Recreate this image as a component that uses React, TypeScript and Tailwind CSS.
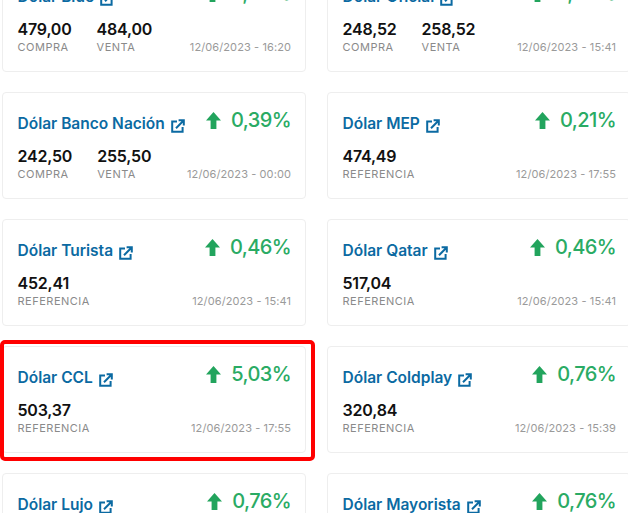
import React from 'react';

interface Cotizacion {
  name: string;
  pct: string;
  date: string;
  buy?: string;
  sell?: string;
  ref?: string;
  highlight?: boolean;
}

const rows: Cotizacion[] = [
  { name: 'Dólar Blue', pct: '0,00%', date: '12/06/2023 - 16:20', buy: '479,00', sell: '484,00' },
  { name: 'Dólar Oficial', pct: '0,00%', date: '12/06/2023 - 15:41', buy: '248,52', sell: '258,52' },
  { name: 'Dólar Banco Nación', pct: '0,39%', date: '12/06/2023 - 00:00', buy: '242,50', sell: '255,50' },
  { name: 'Dólar MEP', pct: '0,21%', date: '12/06/2023 - 17:55', ref: '474,49' },
  { name: 'Dólar Turista', pct: '0,46%', date: '12/06/2023 - 15:41', ref: '452,41' },
  { name: 'Dólar Qatar', pct: '0,46%', date: '12/06/2023 - 15:41', ref: '517,04' },
  { name: 'Dólar CCL', pct: '5,03%', date: '12/06/2023 - 17:55', ref: '503,37', highlight: true },
  { name: 'Dólar Coldplay', pct: '0,76%', date: '12/06/2023 - 15:39', ref: '320,84' },
  { name: 'Dólar Lujo', pct: '0,76%', date: '12/06/2023 - 15:41', ref: '517,04' },
  { name: 'Dólar Mayorista', pct: '0,76%', date: '12/06/2023 - 15:41', ref: '240,00' },
];

function LinkIcon() {
  return (
    <svg width="14" height="14" viewBox="0 0 14 14" fill="none" stroke="#0b6aa2" strokeWidth="2" className="shrink-0 mt-[3px]">
      <path d="M6 2.4H1.2v10.4h10.4V8" />
      <path d="M5 9.2 12.4 1.8M7.6 1.2h5.2v5.2" />
    </svg>
  );
}

function ArrowUp() {
  return (
    <svg width="15" height="17" viewBox="0 0 15 17" fill="#22a45d" className="shrink-0">
      <path d="M7.5 0 15 8.4H10.4V17H4.6V8.4H0Z" />
    </svg>
  );
}

function Value({ value, label }: { value: string; label: string }) {
  return (
    <div className="flex flex-col">
      <span className="text-[16px] leading-[20px] font-semibold text-[#111] tracking-[-0.2px]">{value}</span>
      <span className="text-[11px] leading-[17px] text-[#8a8a8a] tracking-[0.5px]">{label}</span>
    </div>
  );
}

function Card({ item }: { item: Cotizacion }) {
  return (
    <div className="relative h-[107px]">
      <div className="h-full bg-white border border-[#eeeeee] rounded-[4px] pl-[14.5px] pr-[14px] pt-[14px]">
        <div className="flex justify-between items-start h-[39px]">
          <div className="flex items-center gap-[6px] mt-[7px]">
            <span className="text-[15.5px] leading-[20px] font-semibold text-[#0b6aa2]">{item.name}</span>
            <LinkIcon />
          </div>
          <div className="flex items-center gap-[10px]">
            <ArrowUp />
            <span className="text-[20px] leading-[26px] text-[#2aab64] font-medium tracking-[-0.6px]">{item.pct}</span>
          </div>
        </div>
        <div className="flex justify-between items-end">
          <div className="flex gap-[25px]">
            {item.ref ? (
              <Value value={item.ref} label="REFERENCIA" />
            ) : (
              <>
                <Value value={item.buy ?? ''} label="COMPRA" />
                <Value value={item.sell ?? ''} label="VENTA" />
              </>
            )}
          </div>
          <span className="text-[11px] leading-[17px] text-[#9a9a9a] tracking-[0.1px]">{item.date}</span>
        </div>
      </div>
      {item.highlight && (
        <div className="absolute -top-[6px] -bottom-[8px] -left-[2px] -right-[9px] border-[4px] border-[#ff0000] rounded-[5px]" />
      )}
    </div>
  );
}

export default function App() {
  return (
    <div className="w-[628px] h-[513px] overflow-hidden bg-white" style={{ fontFamily: 'Inter, sans-serif' }}>
      <div className="grid grid-cols-[304px_304px] gap-x-[21px] gap-y-[20px] pl-[2px] -mt-[35px]">
        {rows.map((r) => (
          <Card key={r.name} item={r} />
        ))}
      </div>
    </div>
  );
}
